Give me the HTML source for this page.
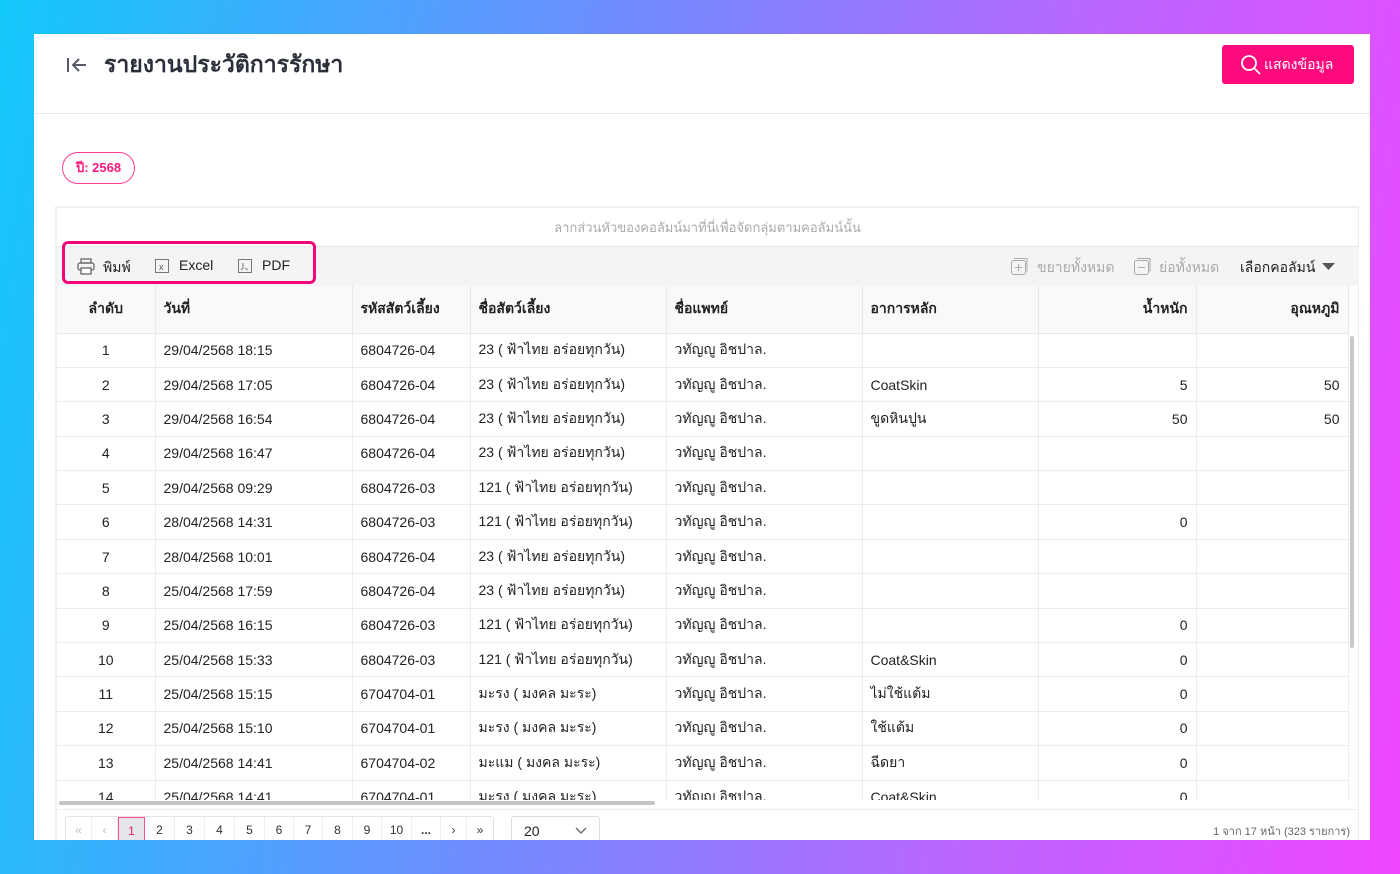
<!DOCTYPE html>
<html><head><meta charset="utf-8">
<style>
*{box-sizing:border-box;margin:0;padding:0}
body{width:1400px;height:874px;overflow:hidden;position:relative;font-family:"Liberation Sans","Noto Sans CJK SC",sans-serif;color:#222;
background:linear-gradient(100deg,#12c8fb 0%,#6f8cff 40%,#b867ff 70%,#f046ff 100%);}
.card{position:absolute;left:34px;top:34px;width:1336px;height:806px;background:#fff;overflow:hidden}
.hdr{position:absolute;left:0;top:0;width:1336px;height:80px;border-bottom:1px solid #e8ecf0}
.title{position:absolute;left:70px;top:13px;font-size:23px;font-weight:bold;color:#2b2f3a}
.btn{position:absolute;left:1188px;top:11px;width:132px;height:39px;background:#ff0a7c;border-radius:3px;color:#fff;font-size:14px;line-height:39px;padding-left:42px}
.chip{position:absolute;left:28px;top:118px;width:73px;height:32px;border:1.5px solid #ff3d8f;border-radius:16px;color:#ff1a7d;font-size:13px;font-weight:bold;text-align:center;line-height:29px}
.grid{position:absolute;left:21px;top:172px;width:1304px;height:640px;border:2px solid #eef0f2;border-right:1px solid #eee}
.grp{height:40px;text-align:center;color:#aaa;font-size:13px;line-height:40px}
.tb{position:absolute;left:0;top:38px;width:1302px;height:40px;background:#f3f4f6;border-top:1px solid #e8e8e8}
.tb span{position:absolute;top:10px;font-size:14px}
.hl{position:absolute;left:5px;top:33px;width:254px;height:43px;border:3px solid #f1077a;border-radius:6px}
table{position:absolute;left:0;top:0;border-collapse:collapse;table-layout:fixed;font-size:14px}
th{background:#f8f9fa;height:47px;font-weight:bold;text-align:left;padding:0 8px;border-right:1px solid #e8e8e8;border-bottom:1px solid #e8e8e8;font-size:14px}
td{height:34.4px;padding:0 8px;border-right:1px solid #ececec;border-bottom:1px solid #ececec;white-space:nowrap;overflow:hidden}
.c{text-align:center}.r{text-align:right}
.clip{position:absolute;left:0;top:78px;width:1292px;height:514px;overflow:hidden}
.vs{position:absolute;left:1293px;top:128px;width:4px;height:312px;background:#c8c8c8;border-radius:2px}
.hs{position:absolute;left:2px;top:593px;width:596px;height:4px;background:#c4c4c4;border-radius:2px}
.pg{position:absolute;left:8px;top:608px;height:26px;display:flex;border:1px solid #e3e3e3;border-radius:3px}
.pg div{height:26px;line-height:26px;text-align:center;font-size:12px;border-right:1px solid #eee;color:#333}
.sel{position:absolute;left:454px;top:608px;width:89px;height:28px;border:1px solid #ddd;border-radius:3px;font-size:14px;padding:6px 12px}
.info{position:absolute;right:8px;top:614px;font-size:11px;color:#666}
</style></head><body>
<div class="card">
 <div class="hdr">
  <svg style="position:absolute;left:32px;top:21px" width="24" height="20" viewBox="0 0 24 20"><path d="M2 3v14M20 10H8M13 4l-6 6 6 6" stroke="#555b66" stroke-width="2" fill="none"/></svg>
  <div class="title">รายงานประวัติการรักษา</div>
  <div class="btn"><svg style="position:absolute;left:18px;top:9px" width="22" height="22" viewBox="0 0 22 22"><circle cx="9" cy="9" r="7" stroke="#fff" stroke-width="1.8" fill="none"/><path d="M14 14l6 6" stroke="#fff" stroke-width="1.8"/></svg>แสดงข้อมูล</div>
 </div>
 <div class="chip">ปี: 2568</div>
 <div class="grid">
  <div class="grp">ลากส่วนหัวของคอลัมน์มาที่นี่เพื่อจัดกลุ่มตามคอลัมน์นั้น</div>
  <div class="tb">
   <svg style="position:absolute;left:20px;top:11px" width="18" height="17" viewBox="0 0 18 17"><rect x="4" y="1" width="10" height="4" fill="none" stroke="#666" stroke-width="1.3"/><rect x="1" y="5" width="16" height="7" rx="2" fill="none" stroke="#666" stroke-width="1.3"/><rect x="4" y="10" width="10" height="6" fill="#fff" stroke="#666" stroke-width="1.3"/></svg>
   <span style="left:46px">พิมพ์</span>
   <svg style="position:absolute;left:98px;top:12px" width="14" height="14"><rect x=".5" y=".5" width="13" height="13" fill="none" stroke="#777"/><text x="4" y="11" font-size="9" fill="#555" font-family="Liberation Sans">x</text></svg>
   <span style="left:122px">Excel</span>
   <svg style="position:absolute;left:181px;top:12px" width="14" height="14"><rect x=".5" y=".5" width="13" height="13" fill="none" stroke="#777"/><path d="M5 4v5l-2 2M7 9l3 2" stroke="#777" fill="none"/></svg>
   <span style="left:205px">PDF</span>
   <svg style="position:absolute;left:954px;top:11px" width="17" height="17"><rect x=".5" y="2.5" width="14" height="14" rx="2" fill="none" stroke="#aaa"/><path d="M3 .5h13v13M7.5 6v7M4 9.5h7" stroke="#aaa" fill="none"/></svg>
   <span style="left:980px;color:#aaa">ขยายทั้งหมด</span>
   <svg style="position:absolute;left:1077px;top:11px" width="17" height="17"><rect x=".5" y="2.5" width="14" height="14" rx="2" fill="none" stroke="#aaa"/><path d="M3 .5h13v13M4 9.5h7" stroke="#aaa" fill="none"/></svg>
   <span style="left:1102px;color:#aaa">ย่อทั้งหมด</span>
   <span style="left:1183px;color:#222">เลือกคอลัมน์</span>
   <svg style="position:absolute;left:1265px;top:16px" width="13" height="8"><path d="M0 0h13L6.5 7z" fill="#555"/></svg>
  </div>
  <div class="hl"></div>
  <div class="clip">
  <table>
   <colgroup><col style="width:98px"><col style="width:197px"><col style="width:118px"><col style="width:196px"><col style="width:196px"><col style="width:176px"><col style="width:158px"><col style="width:152px"></colgroup>
   <tr><th class="c">ลำดับ</th><th>วันที่</th><th>รหัสสัตว์เลี้ยง</th><th>ชื่อสัตว์เลี้ยง</th><th>ชื่อแพทย์</th><th>อาการหลัก</th><th class="r">น้ำหนัก</th><th class="r">อุณหภูมิ</th></tr>
   <tr><td class="c">1</td><td>29/04/2568 18:15</td><td>6804726-04</td><td>23 ( ฟ้าไทย อร่อยทุกวัน)</td><td>วทัญญู อิชปาล.</td><td></td><td class="r"></td><td class="r"></td></tr>
   <tr><td class="c">2</td><td>29/04/2568 17:05</td><td>6804726-04</td><td>23 ( ฟ้าไทย อร่อยทุกวัน)</td><td>วทัญญู อิชปาล.</td><td>CoatSkin</td><td class="r">5</td><td class="r">50</td></tr>
   <tr><td class="c">3</td><td>29/04/2568 16:54</td><td>6804726-04</td><td>23 ( ฟ้าไทย อร่อยทุกวัน)</td><td>วทัญญู อิชปาล.</td><td>ขูดหินปูน</td><td class="r">50</td><td class="r">50</td></tr>
   <tr><td class="c">4</td><td>29/04/2568 16:47</td><td>6804726-04</td><td>23 ( ฟ้าไทย อร่อยทุกวัน)</td><td>วทัญญู อิชปาล.</td><td></td><td class="r"></td><td class="r"></td></tr>
   <tr><td class="c">5</td><td>29/04/2568 09:29</td><td>6804726-03</td><td>121 ( ฟ้าไทย อร่อยทุกวัน)</td><td>วทัญญู อิชปาล.</td><td></td><td class="r"></td><td class="r"></td></tr>
   <tr><td class="c">6</td><td>28/04/2568 14:31</td><td>6804726-03</td><td>121 ( ฟ้าไทย อร่อยทุกวัน)</td><td>วทัญญู อิชปาล.</td><td></td><td class="r">0</td><td class="r"></td></tr>
   <tr><td class="c">7</td><td>28/04/2568 10:01</td><td>6804726-04</td><td>23 ( ฟ้าไทย อร่อยทุกวัน)</td><td>วทัญญู อิชปาล.</td><td></td><td class="r"></td><td class="r"></td></tr>
   <tr><td class="c">8</td><td>25/04/2568 17:59</td><td>6804726-04</td><td>23 ( ฟ้าไทย อร่อยทุกวัน)</td><td>วทัญญู อิชปาล.</td><td></td><td class="r"></td><td class="r"></td></tr>
   <tr><td class="c">9</td><td>25/04/2568 16:15</td><td>6804726-03</td><td>121 ( ฟ้าไทย อร่อยทุกวัน)</td><td>วทัญญู อิชปาล.</td><td></td><td class="r">0</td><td class="r"></td></tr>
   <tr><td class="c">10</td><td>25/04/2568 15:33</td><td>6804726-03</td><td>121 ( ฟ้าไทย อร่อยทุกวัน)</td><td>วทัญญู อิชปาล.</td><td>Coat&amp;Skin</td><td class="r">0</td><td class="r"></td></tr>
   <tr><td class="c">11</td><td>25/04/2568 15:15</td><td>6704704-01</td><td>มะรง ( มงคล มะระ)</td><td>วทัญญู อิชปาล.</td><td>ไม่ใช้แต้ม</td><td class="r">0</td><td class="r"></td></tr>
   <tr><td class="c">12</td><td>25/04/2568 15:10</td><td>6704704-01</td><td>มะรง ( มงคล มะระ)</td><td>วทัญญู อิชปาล.</td><td>ใช้แต้ม</td><td class="r">0</td><td class="r"></td></tr>
   <tr><td class="c">13</td><td>25/04/2568 14:41</td><td>6704704-02</td><td>มะแม ( มงคล มะระ)</td><td>วทัญญู อิชปาล.</td><td>ฉีดยา</td><td class="r">0</td><td class="r"></td></tr>
   <tr><td class="c">14</td><td>25/04/2568 14:41</td><td>6704704-01</td><td>มะรง ( มงคล มะระ)</td><td>วทัญญู อิชปาล.</td><td>Coat&amp;Skin</td><td class="r">0</td><td class="r"></td></tr>
  </table>
  </div>
  <div class="vs"></div>
  <div class="hs"></div>
  <div style="position:absolute;left:0;top:601px;width:1302px;border-top:1px solid #eee"></div>
  <div class="pg">
   <div style="width:26px;color:#bbb">«</div><div style="width:26px;color:#bbb">‹</div>
   <div style="width:27px;background:#e4e6ea;border:1.5px solid #ff4d94;color:#e0206f">1</div>
   <div style="width:30px">2</div><div style="width:30px">3</div><div style="width:30px">4</div><div style="width:30px">5</div><div style="width:29px">6</div><div style="width:29px">7</div><div style="width:30px">8</div><div style="width:29px">9</div><div style="width:30px">10</div><div style="width:29px;font-weight:bold">...</div><div style="width:26px">›</div><div style="width:26px;border:none">»</div>
  </div>
  <div class="sel">20<svg style="position:absolute;left:63px;top:10px" width="12" height="8"><path d="M1 1l5 5 5-5" stroke="#666" stroke-width="1.3" fill="none"/></svg></div>
  <div class="info">1 จาก 17 หน้า (323 รายการ)</div>
 </div>
</div>
</body></html>
